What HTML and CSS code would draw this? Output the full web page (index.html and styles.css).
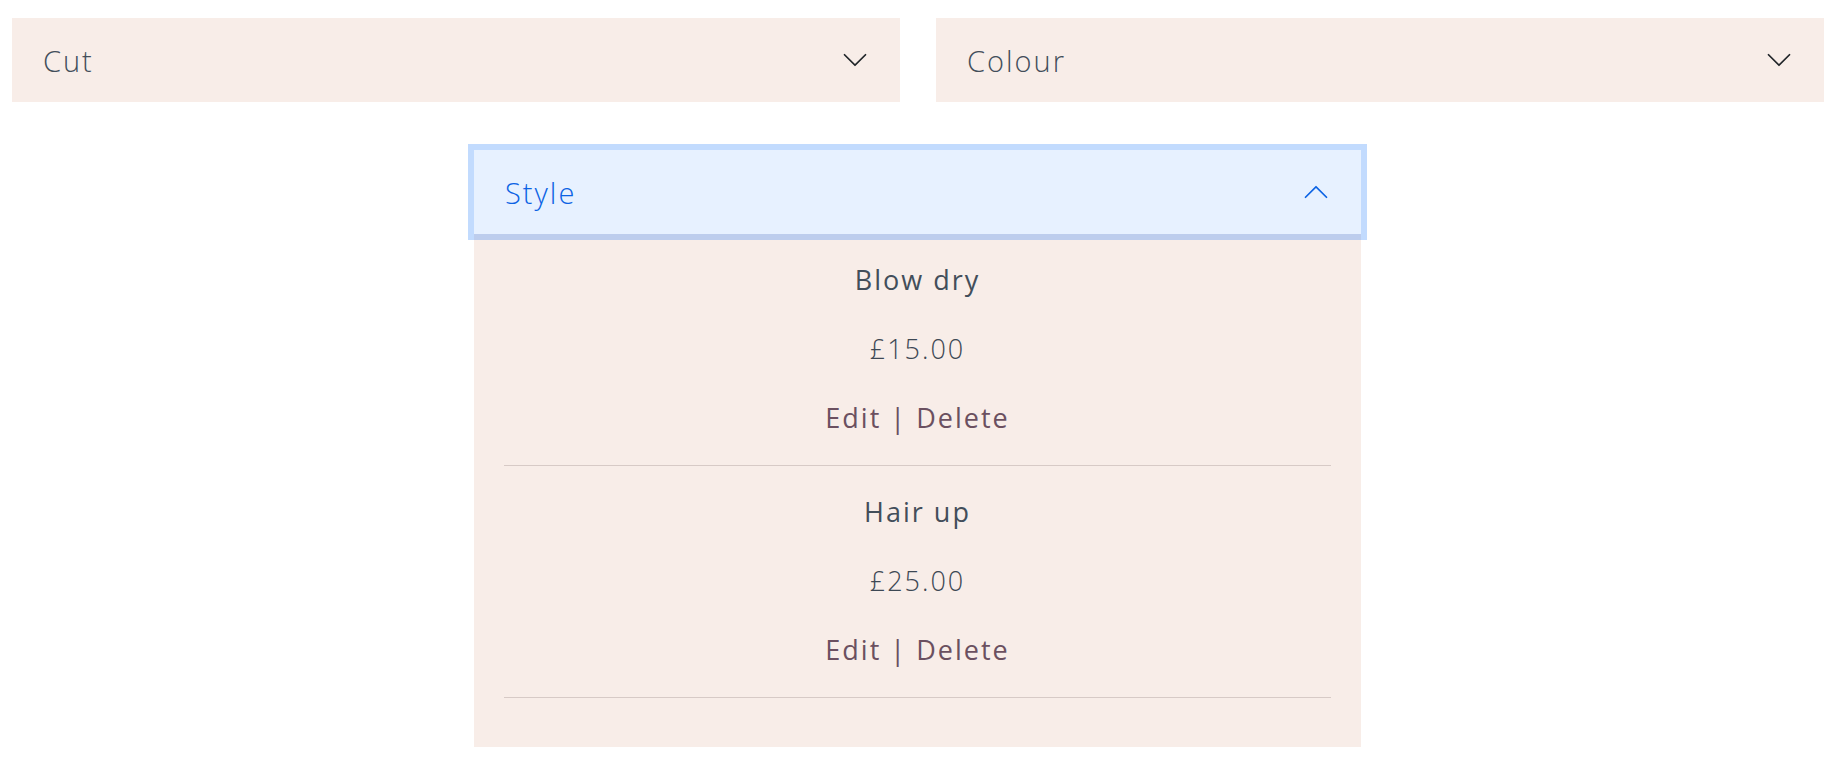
FILE: index.html
```html
<!DOCTYPE html>
<html lang="en">
<head>
<meta charset="utf-8">
<title>Services</title>
<link rel="stylesheet" href="styles.css">
</head>
<body>
<div class="page">
  <div class="top-row">
    <div class="acc-item">
      <button class="acc-btn collapsed" type="button">
        <span class="acc-label">Cut</span>
        <svg class="chev" viewBox="0 0 16 16" aria-hidden="true"><path d="M1.646 4.646a.5.5 0 0 1 .708 0L8 10.293l5.646-5.647a.5.5 0 0 1 .708.708l-6 6a.5.5 0 0 1-.708 0l-6-6a.5.5 0 0 1 0-.708z"/></svg>
      </button>
    </div>
    <div class="acc-item">
      <button class="acc-btn collapsed" type="button">
        <span class="acc-label">Colour</span>
        <svg class="chev" viewBox="0 0 16 16" aria-hidden="true"><path d="M1.646 4.646a.5.5 0 0 1 .708 0L8 10.293l5.646-5.647a.5.5 0 0 1 .708.708l-6 6a.5.5 0 0 1-.708 0l-6-6a.5.5 0 0 1 0-.708z"/></svg>
      </button>
    </div>
  </div>

  <div class="style-row">
    <div class="acc-item open">
      <button class="acc-btn active" type="button">
        <span class="acc-label">Style</span>
        <svg class="chev up" viewBox="0 0 16 16" aria-hidden="true"><path d="M1.646 4.646a.5.5 0 0 1 .708 0L8 10.293l5.646-5.647a.5.5 0 0 1 .708.708l-6 6a.5.5 0 0 1-.708 0l-6-6a.5.5 0 0 1 0-.708z"/></svg>
      </button>
      <div class="acc-body">
        <div class="service">
          <p class="svc-name">Blow dry</p>
          <p class="svc-price">£15.00</p>
          <p class="svc-actions"><a href="#">Edit</a> | <a href="#">Delete</a></p>
        </div>
        <div class="service">
          <p class="svc-name">Hair up</p>
          <p class="svc-price">£25.00</p>
          <p class="svc-actions"><a href="#">Edit</a> | <a href="#">Delete</a></p>
        </div>
      </div>
    </div>
  </div>
</div>
</body>
</html>
```

FILE: styles.css
```css
* { box-sizing: border-box; }

body {
  margin: 0;
  background: #ffffff;
  font-family: "Open Sans", "Noto Sans", sans-serif;
  color: #434e5a;
}

.page {
  padding: 18px 7px 0 12px;
}

.top-row {
  display: grid;
  grid-template-columns: 1fr 1fr;
  column-gap: 36px;
}

.acc-item {
  background: #f8ede8;
}

.acc-btn {
  position: relative;
  display: flex;
  align-items: center;
  justify-content: space-between;
  width: 100%;
  height: 84px;
  padding: 0 31px;
  border: 0;
  margin: 0;
  background: #f8ede8;
  font-family: inherit;
  font-size: 29px;
  font-weight: 300;
  letter-spacing: 2px;
  color: #434e5a;
  text-align: left;
  cursor: pointer;
}

.acc-btn.active {
  background: #e7f1ff;
  color: #0c63e4;
  box-shadow: 0 0 0 6px rgba(13, 110, 253, 0.25);
  z-index: 1;
}

.chev {
  width: 28px;
  height: 28px;
  fill: #212529;
  flex: none;
}

.chev.up {
  transform: rotate(180deg);
  fill: #0c63e4;
}

.style-row {
  margin: 48px 0 0 462px;
  width: 887px;
}

.acc-body {
  padding: 0 30px 49px;
  text-align: center;
}

.service {
  display: flex;
  flex-direction: column;
  gap: 29px;
  padding: 26px 0 27px;
  border-bottom: 1px solid #d7cac6;
}

.service p {
  margin: 0;
  line-height: 40px;
  font-size: 27px;
  letter-spacing: 2px;
}

.svc-name {
  font-weight: 500;
  letter-spacing: 2.6px;
  color: #434e5a;
}

.svc-price {
  font-weight: 300;
  color: #3d4854;
}

.svc-actions {
  font-weight: 500;
  color: #6b5060;
}

.svc-actions a {
  color: #6b5060;
  text-decoration: none;
}
```
